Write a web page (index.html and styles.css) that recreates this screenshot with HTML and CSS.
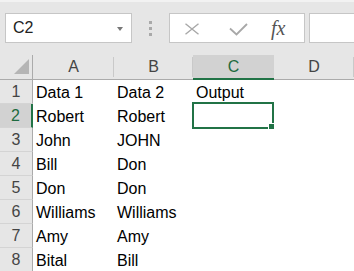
FILE: index.html
```html
<!DOCTYPE html>
<html>
<head>
<meta charset="utf-8">
<link rel="stylesheet" href="styles.css">
</head>
<body>
<div class="app">
  <div class="toolbar">
    <div class="namebox">
      <span class="ref">C2</span>
      <span class="caret"></span>
    </div>
    <div class="grip"><i></i><i></i><i></i></div>
    <div class="fxbox">
      <svg class="ico-x" width="16" height="12" viewBox="0 0 16 12"><path d="M1.5 0.8 L14.5 11.2 M14.5 0.8 L1.5 11.2" stroke="#a8a8a8" stroke-width="1.4" fill="none"/></svg>
      <svg class="ico-check" width="19" height="13" viewBox="0 0 19 13"><path d="M1 5.5 L7.5 11.5 L18 1" stroke="#a8a8a8" stroke-width="1.8" fill="none"/></svg>
      <span class="fx">fx</span>
    </div>
    <div class="formula"></div>
  </div>
  <div class="sheet">
    <div class="corner"><svg width="15" height="15" viewBox="0 0 15 15"><path d="M15 0 L15 15 L0 15 Z" fill="#b5b5b5"/></svg></div>
    <div class="colhdr">A</div>
    <div class="colhdr">B</div>
    <div class="colhdr sel">C</div>
    <div class="colhdr">D</div>

    <div class="rowhdr">1</div>
    <div class="cell">Data 1</div>
    <div class="cell">Data 2</div>
    <div class="cell">Output</div>
    <div class="cell"></div>

    <div class="rowhdr sel">2</div>
    <div class="cell">Robert</div>
    <div class="cell">Robert</div>
    <div class="cell active"><span class="handle"></span></div>
    <div class="cell"></div>

    <div class="rowhdr">3</div>
    <div class="cell">John</div>
    <div class="cell">JOHN</div>
    <div class="cell"></div>
    <div class="cell"></div>

    <div class="rowhdr">4</div>
    <div class="cell">Bill</div>
    <div class="cell">Don</div>
    <div class="cell"></div>
    <div class="cell"></div>

    <div class="rowhdr">5</div>
    <div class="cell">Don</div>
    <div class="cell">Don</div>
    <div class="cell"></div>
    <div class="cell"></div>

    <div class="rowhdr">6</div>
    <div class="cell">Williams</div>
    <div class="cell">Williams</div>
    <div class="cell"></div>
    <div class="cell"></div>

    <div class="rowhdr">7</div>
    <div class="cell">Amy</div>
    <div class="cell">Amy</div>
    <div class="cell"></div>
    <div class="cell"></div>

    <div class="rowhdr">8</div>
    <div class="cell">Bital</div>
    <div class="cell">Bill</div>
    <div class="cell"></div>
    <div class="cell"></div>
  </div>
</div>
</body>
</html>
```

FILE: styles.css
```css
* { box-sizing: border-box; }
html, body { margin: 0; padding: 0; }
body {
  width: 354px;
  height: 271px;
  overflow: hidden;
  background: #fff;
  font-family: "Liberation Sans", Arial, sans-serif;
}
.app { width: 354px; }

.toolbar {
  height: 55px;
  background: #e6e6e6;
  border-top: 2px solid #f2f2f2;
  padding-top: 11px;
  display: flex;
  align-items: flex-start;
}
.namebox {
  margin-left: 5px;
  width: 127px;
  height: 30px;
  background: #fff;
  border: 1px solid #c6c6c6;
  display: flex;
  align-items: center;
  justify-content: space-between;
  padding: 0 8px 0 7px;
}
.ref {
  font-size: 16px;
  color: #222;
}
.caret {
  width: 0;
  height: 0;
  border-left: 3.5px solid transparent;
  border-right: 3.5px solid transparent;
  border-top: 4px solid #777;
  margin-top: 1px;
}
.grip {
  width: 37px;
  height: 30px;
  display: flex;
  flex-direction: column;
  align-items: center;
  justify-content: center;
  gap: 3px;
}
.grip i {
  display: block;
  width: 3px;
  height: 3px;
  background: #a9a9a9;
}
.fxbox {
  width: 136px;
  height: 30px;
  background: #fff;
  border: 1px solid #c6c6c6;
  display: flex;
  align-items: center;
  padding-left: 14px;
}
.ico-x { margin-top: 2px; }
.ico-check { margin-left: 29px; margin-top: 2px; }
.fx {
  margin-left: 23px;
  font-family: "Liberation Serif", "Times New Roman", serif;
  font-style: italic;
  font-size: 20px;
  color: #555;
  letter-spacing: 0;
}
.formula {
  flex: 1;
  margin-left: 4px;
  height: 30px;
  background: #fff;
  border: 1px solid #c6c6c6;
  border-right: none;
}

.sheet {
  display: grid;
  grid-template-columns: 33px 81px 79px 81px 80px;
  grid-template-rows: 25px repeat(8, 24px);
}
.corner {
  background: #e6e6e6;
  border-right: 1px solid #ababab;
  border-bottom: 1px solid #ababab;
  display: flex;
  justify-content: flex-end;
  align-items: flex-end;
  padding: 0 3px 5px 0;
}
.corner svg { display: block; }
.colhdr {
  background: #e6e6e6 linear-gradient(#c9c9c9, #c9c9c9) right 2px / 1px 20px no-repeat;
  border-bottom: 1px solid #ababab;
  font-size: 16px;
  color: #444;
  display: flex;
  align-items: center;
  justify-content: center;
  padding-bottom: 1px;
}
.colhdr.sel {
  background: #d2d2d2;
  border-bottom: 2px solid #217346;
  color: #1d6b40;
  padding-bottom: 0;
}
.rowhdr {
  background: #e6e6e6;
  border-right: 1px solid #ababab;
  border-bottom: 1px solid #d4d4d4;
  font-size: 16px;
  color: #444;
  display: flex;
  align-items: center;
  justify-content: center;
  padding-top: 1px;
}
.rowhdr.sel {
  background: #d2d2d2;
  border-right: 2px solid #217346;
  color: #1d6b40;
}
.cell {
  font-size: 16px;
  color: #000;
  display: flex;
  align-items: center;
  padding: 1px 0 0 3px;
  white-space: nowrap;
}
.cell.active { position: relative; }
.cell.active::after {
  content: "";
  position: absolute;
  left: -1px;
  top: -2px;
  right: 0;
  bottom: -1px;
  border: 2px solid #217346;
}
.handle {
  position: absolute;
  left: 75px;
  top: 19px;
  width: 7px;
  height: 7px;
  background: #217346;
  border: 1px solid #fff;
  z-index: 2;
}
```
